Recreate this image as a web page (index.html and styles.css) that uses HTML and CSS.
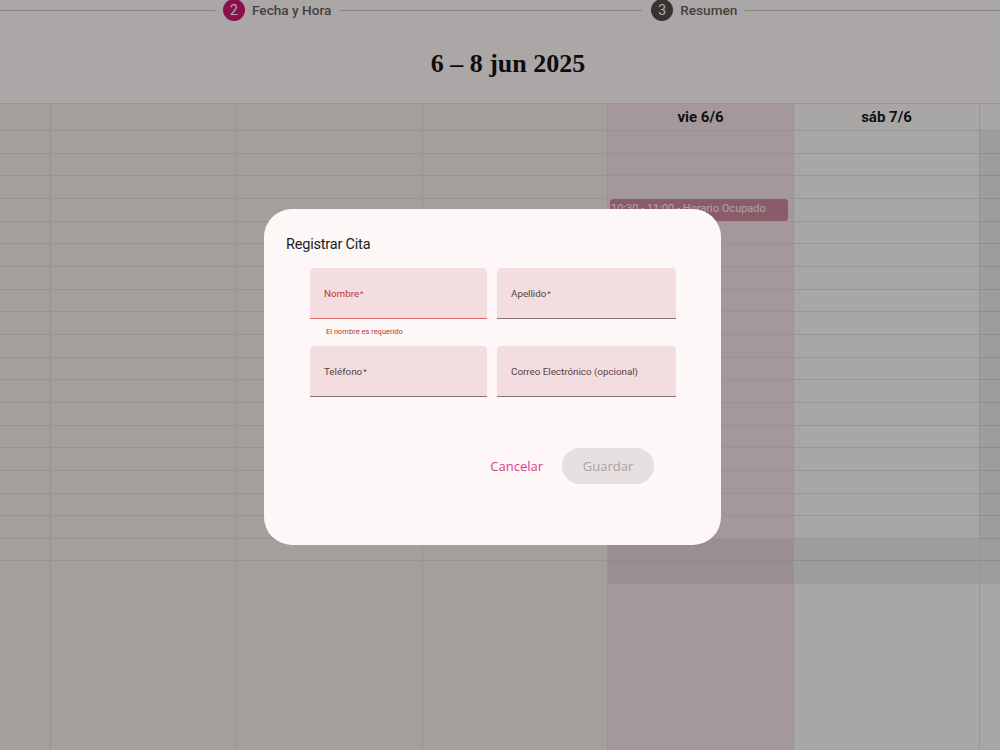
FILE: index.html
```html
<!DOCTYPE html>
<html lang="es">
<head>
<meta charset="utf-8">
<title>Registrar Cita</title>
<link rel="stylesheet" href="styles.css">
</head>
<body>
<div class="page">
  <div class="stepper">
    <div class="line l1"></div>
    <div class="step">
      <span class="circle active">2</span>
      <span class="step-label">Fecha y Hora</span>
    </div>
    <div class="line l2"></div>
    <div class="step">
      <span class="circle dark">3</span>
      <span class="step-label">Resumen</span>
    </div>
    <div class="line l3"></div>
  </div>

  <h1 class="range-title">6 – 8 jun 2025</h1>

  <div class="cal">
    <div class="col axis">
      <div class="hd"></div>
      <div class="body">
        <div class="slot"></div><div class="slot"></div><div class="slot"></div><div class="slot"></div><div class="slot"></div>
        <div class="slot"></div><div class="slot"></div><div class="slot"></div><div class="slot"></div><div class="slot"></div>
        <div class="slot"></div><div class="slot"></div><div class="slot"></div><div class="slot"></div><div class="slot"></div>
        <div class="slot"></div><div class="slot"></div><div class="slot"></div><div class="slot"></div>
      </div>
    </div>
    <div class="col day past">
      <div class="hd"></div>
      <div class="body">
        <div class="slot"></div><div class="slot"></div><div class="slot"></div><div class="slot"></div><div class="slot"></div>
        <div class="slot"></div><div class="slot"></div><div class="slot"></div><div class="slot"></div><div class="slot"></div>
        <div class="slot"></div><div class="slot"></div><div class="slot"></div><div class="slot"></div><div class="slot"></div>
        <div class="slot"></div><div class="slot"></div><div class="slot"></div><div class="slot"></div>
      </div>
    </div>
    <div class="col day past">
      <div class="hd"></div>
      <div class="body">
        <div class="slot"></div><div class="slot"></div><div class="slot"></div><div class="slot"></div><div class="slot"></div>
        <div class="slot"></div><div class="slot"></div><div class="slot"></div><div class="slot"></div><div class="slot"></div>
        <div class="slot"></div><div class="slot"></div><div class="slot"></div><div class="slot"></div><div class="slot"></div>
        <div class="slot"></div><div class="slot"></div><div class="slot"></div><div class="slot"></div>
      </div>
    </div>
    <div class="col day past narrow">
      <div class="hd"></div>
      <div class="body">
        <div class="slot"></div><div class="slot"></div><div class="slot"></div><div class="slot"></div><div class="slot"></div>
        <div class="slot"></div><div class="slot"></div><div class="slot"></div><div class="slot"></div><div class="slot"></div>
        <div class="slot"></div><div class="slot"></div><div class="slot"></div><div class="slot"></div><div class="slot"></div>
        <div class="slot"></div><div class="slot"></div><div class="slot"></div><div class="slot"></div>
      </div>
    </div>
    <div class="col day today">
      <div class="hd">vie 6/6</div>
      <div class="body">
        <div class="slot"></div><div class="slot"></div><div class="slot"></div><div class="slot"></div><div class="slot"></div>
        <div class="slot"></div><div class="slot"></div><div class="slot"></div><div class="slot"></div><div class="slot"></div>
        <div class="slot"></div><div class="slot"></div><div class="slot"></div><div class="slot"></div><div class="slot"></div>
        <div class="slot"></div><div class="slot"></div><div class="slot"></div><div class="slot"></div>
        <div class="event">10:30 - 11:00 - Horario Ocupado</div>
        <div class="nonbiz late"></div>
      </div>
    </div>
    <div class="col day">
      <div class="hd">sáb 7/6</div>
      <div class="body">
        <div class="slot"></div><div class="slot"></div><div class="slot"></div><div class="slot"></div><div class="slot"></div>
        <div class="slot"></div><div class="slot"></div><div class="slot"></div><div class="slot"></div><div class="slot"></div>
        <div class="slot"></div><div class="slot"></div><div class="slot"></div><div class="slot"></div><div class="slot"></div>
        <div class="slot"></div><div class="slot"></div><div class="slot"></div><div class="slot"></div>
        <div class="nonbiz late"></div>
      </div>
    </div>
    <div class="col day strip">
      <div class="hd"></div>
      <div class="body">
        <div class="slot"></div><div class="slot"></div><div class="slot"></div><div class="slot"></div><div class="slot"></div>
        <div class="slot"></div><div class="slot"></div><div class="slot"></div><div class="slot"></div><div class="slot"></div>
        <div class="slot"></div><div class="slot"></div><div class="slot"></div><div class="slot"></div><div class="slot"></div>
        <div class="slot"></div><div class="slot"></div><div class="slot"></div><div class="slot"></div>
        <div class="nonbiz allday"></div>
      </div>
    </div>
  </div>
</div>

<div class="backdrop"></div>

<div class="dialog" role="dialog" aria-labelledby="dlg-title">
  <h2 class="dialog-title" id="dlg-title">Registrar Cita</h2>
  <form class="form">
    <div class="field-wrap">
      <div class="field invalid"><span class="label">Nombre<span class="req">*</span></span></div>
      <div class="hint error">El nombre es requerido</div>
    </div>
    <div class="field-wrap">
      <div class="field"><span class="label">Apellido<span class="req">*</span></span></div>
    </div>
    <div class="field-wrap">
      <div class="field"><span class="label">Teléfono<span class="req">*</span></span></div>
    </div>
    <div class="field-wrap">
      <div class="field"><span class="label">Correo Electrónico (opcional)</span></div>
    </div>
  </form>
  <div class="actions">
    <button type="button" class="btn text">Cancelar</button>
    <button type="button" class="btn filled" disabled>Guardar</button>
  </div>
</div>
</body>
</html>
```

FILE: styles.css
```css
* { box-sizing: border-box; }

html, body {
  margin: 0;
  padding: 0;
  height: 100%;
  overflow: hidden;
}

body {
  background: #fdf7f7;
  font-family: Roboto, "Liberation Sans", sans-serif;
  color: #1d1b1c;
}

.page {
  height: 100vh;
  display: flex;
  flex-direction: column;
}

/* Stepper */
.stepper {
  height: 20px;
  display: flex;
  align-items: center;
  flex: 0 0 auto;
}

.line {
  height: 1px;
  background: #c9c3c3;
}

.l1 { width: 215px; margin-right: 8px; }
.l2 { width: 303px; margin: 0 9px 0 8px; }
.l3 { flex: 1; margin-left: 8px; }

.step {
  display: flex;
  align-items: center;
  gap: 7px;
}

.circle {
  width: 22px;
  height: 22px;
  border-radius: 50%;
  display: flex;
  align-items: center;
  justify-content: center;
  font-size: 14px;
  color: #fff;
}

.circle.active { background: #ce166d; }
.circle.dark { background: #554b4c; }

.step-label {
  font-size: 13.6px;
  font-weight: 500;
  color: #675f60;
}

/* Title */
.range-title {
  margin: 0;
  padding: 29px 0 24px 16px;
  line-height: 30px;
  text-align: center;
  font-family: "Liberation Serif", "Times New Roman", serif;
  font-weight: 700;
  font-size: 26px;
  color: #161313;
}

/* Calendar */
.cal {
  flex: 1;
  display: flex;
  border-top: 1px solid #e0dbd9;
}

.col {
  display: flex;
  flex-direction: column;
  background: #f0eae8;
}

.col + .col { border-left: 1px solid #e0dbd9; }

.axis { width: 50px; }
.day { width: 186px; }
.day.narrow { width: 185px; }
.day.strip { flex: 1; width: auto; }
.today { background: #f4e0e4; }
.col.day:not(.past):not(.today) { background: #faf6f4; }

.hd {
  height: 27px;
  border-bottom: 1px solid #e0dbd9;
  display: flex;
  align-items: center;
  justify-content: center;
  font-size: 15px;
  font-weight: 700;
  color: #1a1818;
}

.body {
  position: relative;
}

.slot {
  height: 22.667px;
  border-bottom: 1px solid #e0dbd9;
}

.nonbiz {
  position: absolute;
  left: 0;
  right: 0;
  background: rgba(0, 0, 0, 0.06);
}

.nonbiz.late { top: 408px; height: 45px; }
.nonbiz.allday { top: 0; height: 453px; }

.event {
  position: absolute;
  top: 68px;
  left: 2px;
  right: 5px;
  height: 22px;
  border-radius: 3px;
  background: #ce869d;
  color: rgba(255, 255, 255, 0.95);
  font-size: 11px;
  line-height: 20px;
  padding-left: 1px;
  white-space: nowrap;
  overflow: hidden;
}

/* Backdrop */
.backdrop {
  position: fixed;
  inset: 0;
  background: rgba(0, 0, 0, 0.32);
}

/* Dialog */
.dialog {
  position: fixed;
  left: 264px;
  top: 209px;
  width: 457px;
  height: 336px;
  background: #fdf7f7;
  border-radius: 28px;
  padding: 24px 22px 0;
}

.dialog-title {
  margin: 0;
  font-size: 14.5px;
  letter-spacing: -0.2px;
  font-weight: 400;
  line-height: 24px;
  color: #1d1b1c;
}

.form {
  margin: 11px 0 0 24px;
  width: 366px;
  display: grid;
  grid-template-columns: 177px 179px;
  column-gap: 10px;
}

.field-wrap {
  height: 78px;
}

.field {
  height: 51px;
  background: #f4dde0;
  border-radius: 4px 4px 0 0;
  border-bottom: 1px solid #857375;
  display: flex;
  align-items: center;
  padding-left: 14px;
  padding-top: 1px;
}

.field.invalid {
  border-bottom: 1px solid #e06a6a;
}

.label {
  font-size: 9.8px;
  color: #534345;
}

.field.invalid .label { color: #b8352e; }

.req { margin-left: 1px; font-size: 8px; vertical-align: 1px; }

.hint {
  margin: 8px 0 0 16px;
  font-size: 7.5px;
  line-height: 10px;
}

.hint.error { color: #b8352e; }

.actions {
  margin-top: 24px;
  display: flex;
  justify-content: flex-end;
  align-items: center;
  gap: 7px;
  padding-right: 45px;
}

.btn {
  height: 36px;
  border: 0;
  border-radius: 18px;
  font-family: "Open Sans", "Liberation Sans", sans-serif;
  font-size: 13px;
  background: transparent;
  padding: 0 12px;
  cursor: pointer;
}

.btn.text { color: #d6408a; }

.btn.filled {
  width: 92px;
  padding: 0;
  background: #e6e0e1;
  color: #aaa3a5;
}
```
